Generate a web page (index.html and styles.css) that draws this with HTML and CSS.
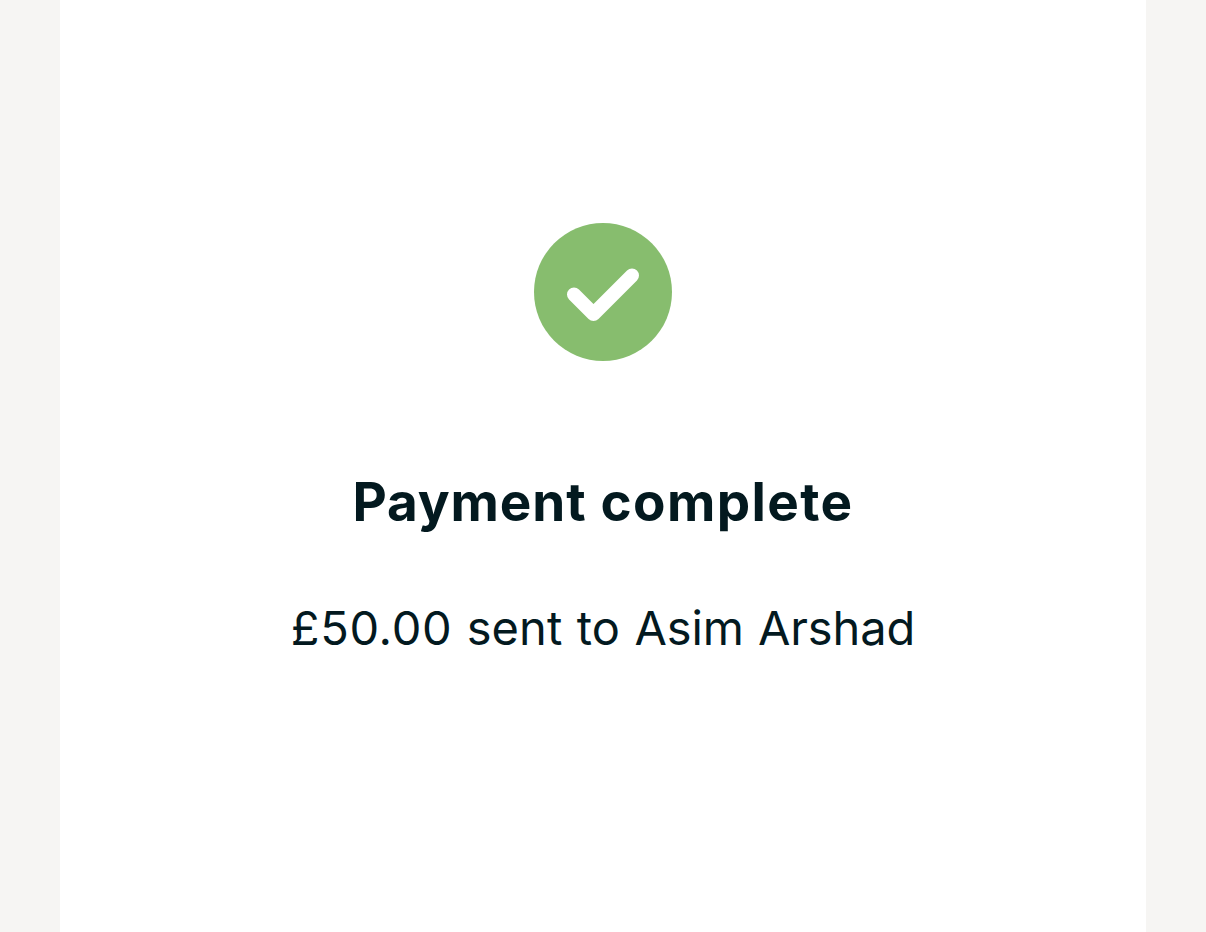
FILE: index.html
```html
<!DOCTYPE html>
<html lang="en">
<head>
<meta charset="utf-8">
<title>Payment complete</title>
<link rel="stylesheet" href="styles.css">
</head>
<body>
<main class="panel">
  <svg class="icon" viewBox="0 0 138 138" aria-hidden="true">
    <circle class="icon-disc" cx="69" cy="69" r="69"/>
    <path class="icon-check" d="M40 71.5L59.5 91L98 52.5"/>
  </svg>
  <h1 class="title">Payment <span class="status">complete</span></h1>
  <p class="detail"><span class="amount">£50.00</span> sent to <span class="name">Asim Arshad</span></p>
</main>
</body>
</html>
```
FILE: styles.css
```css
* { box-sizing: border-box; }
body { margin: 0; background: #f6f5f3; }
.panel {
  height: 932px;
  margin: 0 60px;
  padding-top: 223px;
  background: #fff;
  color: #03191f;
  font-family: Inter, sans-serif;
  display: flex;
  flex-direction: column;
  align-items: center;
  overflow: hidden;
}
.icon { width: 138px; height: 138px; flex: none; }
.icon-disc { fill: #87bd6e; }
.icon-check { fill: none; stroke: #fff; stroke-width: 14; stroke-linecap: round; stroke-linejoin: round; }
.title { margin: 108px 0 0; font-size: 53px; line-height: 66px; font-weight: 700; letter-spacing: 0.9px; word-spacing: 0.5px; white-space: nowrap; }
.status { letter-spacing: 1.4px; }
.detail { margin: 63px 0 0; font-size: 47px; line-height: 60px; font-weight: 370; letter-spacing: 0.1px; word-spacing: 1px; white-space: nowrap; }
.amount { letter-spacing: 0.7px; }
.name { letter-spacing: -0.1px; }
```
